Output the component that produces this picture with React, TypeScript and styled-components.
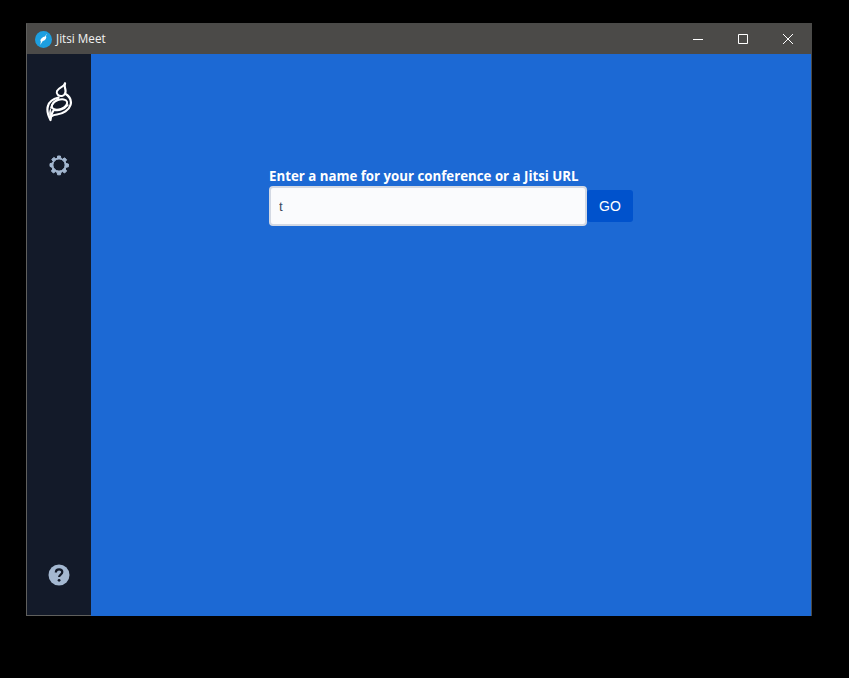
import React, { useState } from "react";
import styled, { createGlobalStyle } from "styled-components";

const GlobalStyle = createGlobalStyle`
  html, body {
    margin: 0;
    height: 100%;
    background: #000;
  }
  #root {
    height: 100%;
  }
  * {
    box-sizing: border-box;
  }
`;

const Screen = styled.div`
  width: 849px;
  height: 678px;
  padding: 23px 37px 62px 26px;
  background: #000;
`;

const AppWindow = styled.div`
  width: 786px;
  height: 593px;
  display: flex;
  flex-direction: column;
  border: 1px solid #5f5f5d;
  border-right-color: #4a4a48;
  border-top-color: #4a4a48;
  border-bottom: 0;
`;

const TitleBar = styled.div`
  height: 30px;
  flex: none;
  display: flex;
  align-items: center;
  background: #4b4a48;
  padding-left: 8px;
`;

const AppTitle = styled.span`
  margin: 0 0 2px 4px;
  font: 11.7px "Open Sans", "Noto Sans", sans-serif;
  color: #f2f2f2;
`;

const WindowControls = styled.div`
  margin-left: auto;
  display: flex;
  height: 100%;
  padding-right: 1px;
`;

const ControlButton = styled.div`
  width: 45px;
  height: 100%;
  display: flex;
  align-items: center;
  justify-content: center;
  padding-bottom: 1px;
  color: #fff;
`;

const Body = styled.div`
  flex: 1;
  display: flex;
  min-height: 0;
`;

const Sidebar = styled.nav`
  width: 64px;
  flex: none;
  display: flex;
  flex-direction: column;
  align-items: center;
  background: #131a29;
  border-bottom: 1px solid #5f5f5d;
  padding-top: 28px;
  padding-bottom: 28px;
`;

const SidebarLogo = styled.div`
  height: 40px;
  display: flex;
  justify-content: center;
`;

const SidebarIcon = styled.div<{ $pushed?: boolean }>`
  width: 24px;
  height: 24px;
  display: flex;
  color: #a4b8d1;
  margin-top: ${({ $pushed }) => ($pushed ? "auto" : "31px")};
`;

const Main = styled.main`
  flex: 1;
  background: #1c69d4;
  padding: 114px 0 0 178px;
`;

const Form = styled.form`
  width: 364px;
  display: flex;
  flex-direction: column;
`;

const Label = styled.label`
  font: bold 13.27px/16px "Open Sans", "Noto Sans", sans-serif;
  margin-bottom: 2px;
  color: #fff;
  white-space: nowrap;
`;

const InputRow = styled.div`
  display: flex;
  align-items: center;
`;

const RoomInput = styled.input`
  width: 318px;
  height: 40px;
  padding: 0 8px;
  border: 2px solid #d3d9e4;
  border-radius: 4px;
  background: #fafbfd;
  color: #3d4a5e;
  font: 13.3px "Liberation Sans", Arial, sans-serif;
  outline: none;
`;

const GoButton = styled.button`
  width: 46px;
  height: 32px;
  padding: 0;
  border: 0;
  border-radius: 3px;
  background: #0052cc;
  color: #fff;
  font: 14px "Liberation Sans", Arial, sans-serif;
`;

const BrandBadge = () => (
  <svg width="17" height="17" viewBox="0 0 17 17">
    <circle cx="8.500" cy="8.500" r="8.500" fill="#1d9fe0" />
    <path
      d="M11.500 2.800c.1 1-.2 1.600-.7 2.300.7.800.6 2.100-.2 3.100-.8 1-1.900 1.600-2.900 1.900l-2.400 4 .6-3.600c-.8-.7-.5-2 .5-3 1.100-1.100 2.400-1.700 3.500-1.900.7-.7 1.200-1.600 1.600-2.800z"
      fill="#fff"
    />
  </svg>
);

const JitsiLogo = () => (
  <svg width="28" height="40" viewBox="0 0 28 40" fill="none" stroke="#fff" strokeLinejoin="round" strokeLinecap="round">
    <path d="M20 1.500C19 5 14 5 12 9c-1.200 3 1.500 5.500 5 5 1.500-.3 2.500-1.200 3-2.500" strokeWidth="2" />
    <path d="M20 1.500c-1.500 4 2 6.500 0 10 4 2.500 7 6.500 5.500 11.500-1.500 5-7.500 9-13.500 9.500-2 .2-4 .5-5 1.500" strokeWidth="2.200" />
    <path d="M13.500 15.500C8 17 4 20 3 24c-1.500 4 0 9 2.500 14 .5-4 1.500-8 3.500-10" strokeWidth="2.200" />
    <ellipse cx="14.500" cy="22.500" rx="8" ry="4.600" transform="rotate(-20 14.500 22.500)" strokeWidth="2" />
    <path d="M6 26c1-4 3.500-7.500 7.500-9" strokeWidth="1.800" />
    <path d="M9 28c4 1.500 10 0 14-5" strokeWidth="1.400" />
    <path d="M5.500 36c-1-3-1.500-6 0-9 .5 3 .5 6 0 9z" fill="#fff" strokeWidth="0.800" />
  </svg>
);

const GearIcon = () => (
  <svg width="24" height="24" viewBox="0 0 24 24" fill="currentColor" stroke="currentColor" strokeWidth="1" strokeLinejoin="round">
    <path
      fillRule="evenodd"
      d="M10.600 3h2.800l.5 2.400c.6.200 1.200.5 1.700.8l2-1.400 2 2-1.400 2c.3.500.6 1.100.8 1.700l2.400.5v2.800l-2.400.5c-.2.600-.5 1.200-.8 1.700l1.400 2-2 2-2-1.400c-.5.3-1.100.6-1.700.8l-.5 2.400h-2.800l-.5-2.400c-.6-.2-1.200-.5-1.700-.8l-2 1.400-2-2 1.400-2c-.3-.5-.6-1.100-.8-1.700L3 13.400v-2.800l2.400-.5c.2-.6.5-1.200.8-1.700l-1.400-2 2-2 2 1.400c.5-.3 1.100-.6 1.700-.8zM12 5.900a6.100 6.100 0 1 0 0 12.200 6.100 6.100 0 0 0 0-12.200z"
    />
  </svg>
);

const HelpIcon = () => (
  <svg width="24" height="24" viewBox="0 0 24 24">
    <circle cx="12" cy="12" r="10.500" fill="currentColor" />
    <path
      d="M8.800 9.500c0-2 1.400-3.200 3.300-3.200s3.200 1.100 3.200 2.800c0 2.500-3.200 2.500-3.200 5"
      fill="none"
      stroke="#131a29"
      strokeWidth="2.200"
    />
    <circle cx="12.100" cy="17.300" r="1.400" fill="#131a29" />
  </svg>
);

const App: React.FC = () => {
  const [room, setRoom] = useState("t");

  return (
    <Screen>
      <GlobalStyle />
      <AppWindow>
        <TitleBar>
          <BrandBadge />
          <AppTitle>Jitsi Meet</AppTitle>
          <WindowControls>
            <ControlButton>
              <svg width="10" height="10" viewBox="0 0 10 10" stroke="currentColor">
                <path d="M0 5.500h10" />
              </svg>
            </ControlButton>
            <ControlButton>
              <svg width="10" height="10" viewBox="0 0 10 10" fill="none" stroke="currentColor">
                <path d="M.5.500h9v9h-9z" />
              </svg>
            </ControlButton>
            <ControlButton>
              <svg width="10" height="10" viewBox="0 0 10 10" stroke="currentColor">
                <path d="M0 0l10 10M10 0L0 10" />
              </svg>
            </ControlButton>
          </WindowControls>
        </TitleBar>
        <Body>
          <Sidebar>
            <SidebarLogo>
              <JitsiLogo />
            </SidebarLogo>
            <SidebarIcon>
              <GearIcon />
            </SidebarIcon>
            <SidebarIcon $pushed>
              <HelpIcon />
            </SidebarIcon>
          </Sidebar>
          <Main>
            <Form onSubmit={(e) => e.preventDefault()}>
              <Label htmlFor="room">Enter a name for your conference or a Jitsi URL</Label>
              <InputRow>
                <RoomInput id="room" value={room} onChange={(e) => setRoom(e.target.value)} />
                <GoButton type="submit">GO</GoButton>
              </InputRow>
            </Form>
          </Main>
        </Body>
      </AppWindow>
    </Screen>
  );
};

export default App;
